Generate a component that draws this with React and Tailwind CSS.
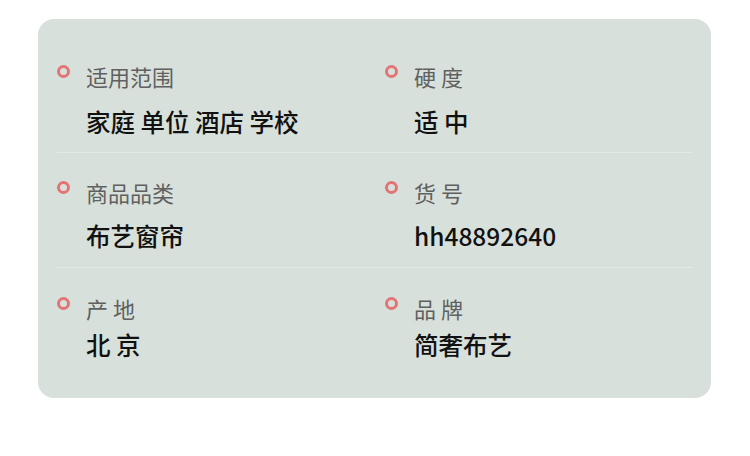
const rows = [
  {
    pt: "pt-[42px]",
    gap: "mt-[14px]",
    pb: "pb-[13px]",
    border: true,
    cells: [
      { label: "适用范围", value: "家庭 单位 酒店 学校" },
      { label: "硬 度", value: "适 中" },
    ],
  },
  {
    pt: "pt-[24px]",
    gap: "mt-[12px]",
    pb: "pb-[14px]",
    border: true,
    cells: [
      { label: "商品品类", value: "布艺窗帘" },
      { label: "货 号", value: "hh48892640" },
    ],
  },
  {
    pt: "pt-[25px]",
    gap: "mt-[5px]",
    pb: "pb-[36px]",
    border: false,
    cells: [
      { label: "产 地", value: "北 京" },
      { label: "品 牌", value: "简奢布艺" },
    ],
  },
];

function Cell({ label, value, gap }) {
  return (
    <div className="flex flex-col">
      <div className="flex items-start">
        <span className="mt-[4px] h-[13px] w-[13px] shrink-0 rounded-full border-[3px] border-[#e27474]" />
        <span className="ml-[16px] text-[22px] leading-[30px] text-[#606060]">{label}</span>
      </div>
      <div className={`${gap} pl-[29px] text-[24.5px] leading-[34px] font-medium text-[#111111]`}>{value}</div>
    </div>
  );
}

export default function App() {
  return (
    <div
      className="w-[750px] h-[456px] bg-white pt-[19px] pl-[38px]"
      style={{ fontFamily: '"Noto Sans CJK SC", "Noto Sans", sans-serif' }}
    >
      <div className="w-[673px] h-[379px] rounded-[16px] bg-[#d8e0db] px-[19px]">
        {rows.map((r, i) => (
          <div
            key={i}
            className={`grid grid-cols-[328px_1fr] ${r.pt} ${r.pb} ${r.border ? "border-b border-[#e3e9e5]" : ""}`}
          >
            {r.cells.map((c, j) => (
              <Cell key={j} label={c.label} value={c.value} gap={r.gap} />
            ))}
          </div>
        ))}
      </div>
    </div>
  );
}
